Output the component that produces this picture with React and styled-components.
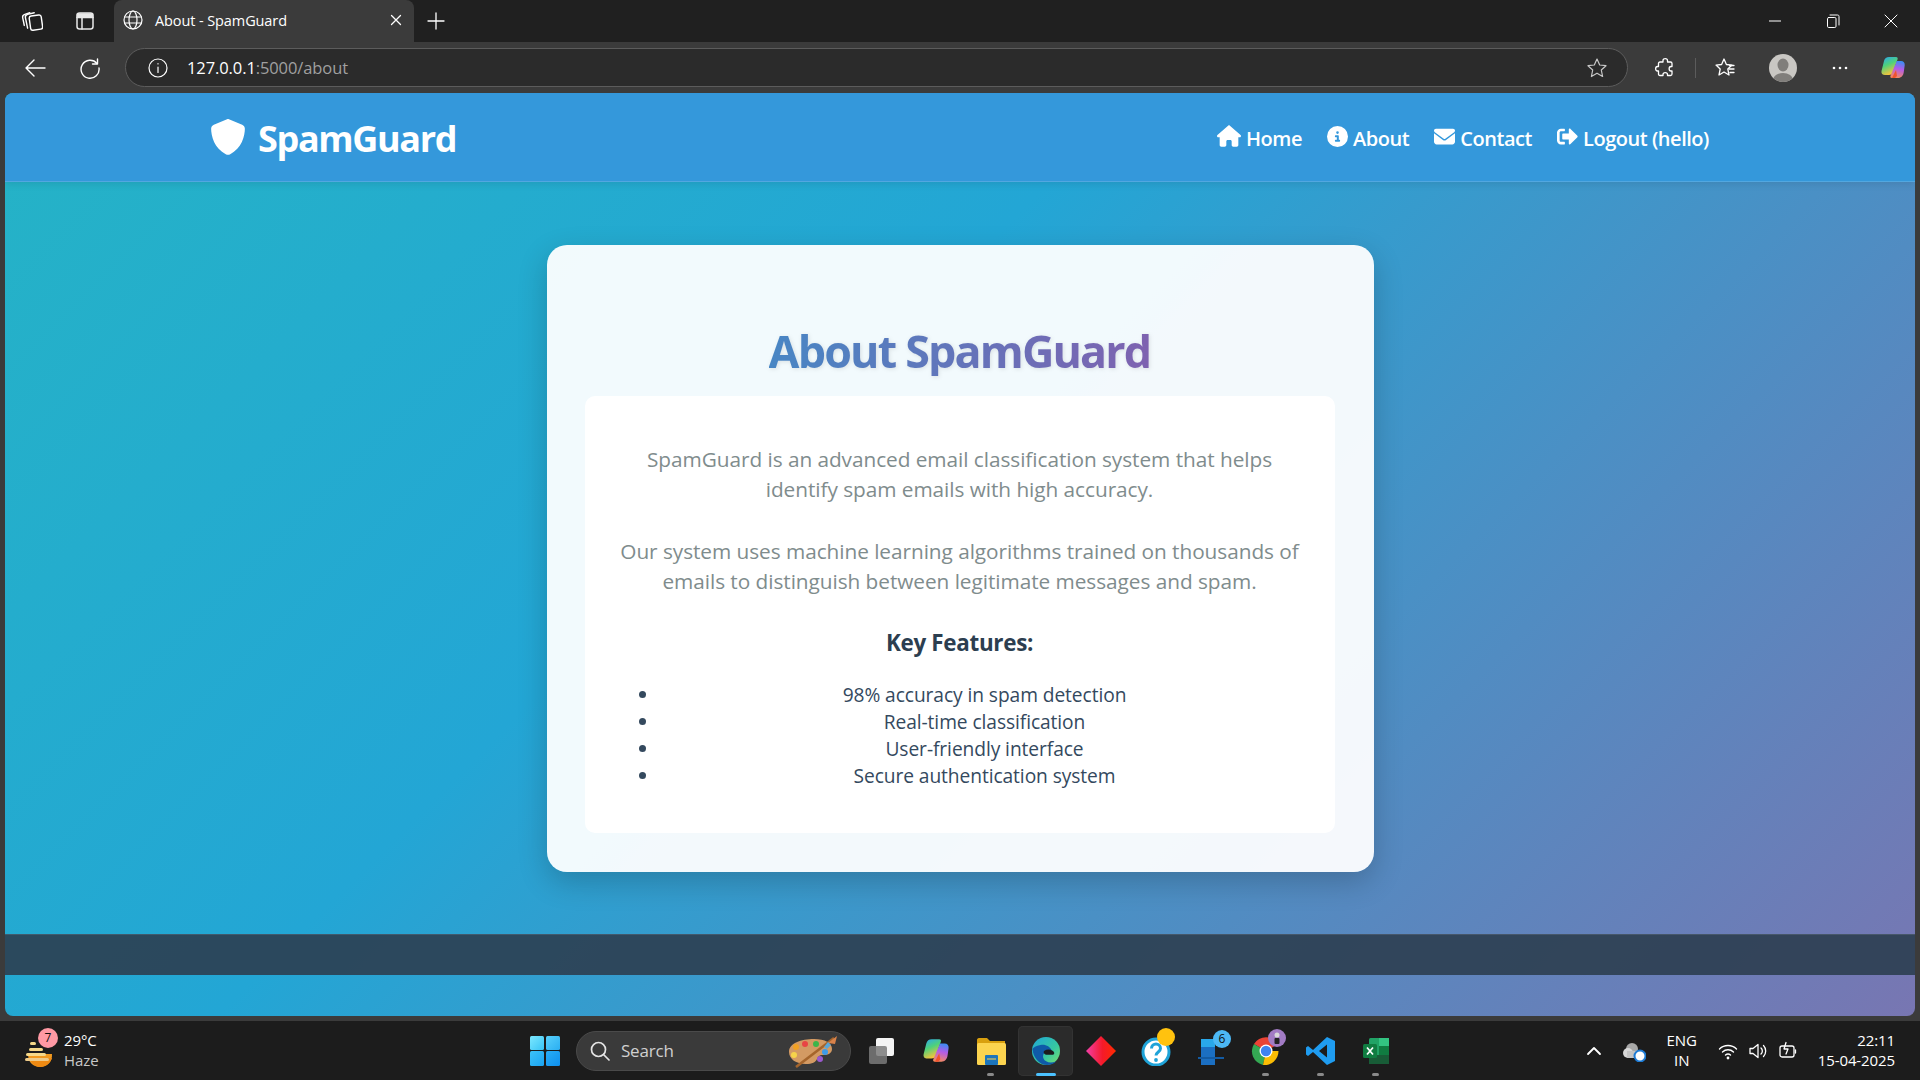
import React from 'react';
import styled, { createGlobalStyle } from 'styled-components';
import { FaSignOutAlt } from 'react-icons/fa';
import { FaShield, FaHouse, FaCircleInfo, FaEnvelope } from 'react-icons/fa6';

const GlobalStyle = createGlobalStyle`
  html, body { margin: 0; padding: 0; background: #3b3b3b; overflow: hidden; }
  * { box-sizing: border-box; }
`;

const Line = ({ size = 20, w = 1.3, children, vb = '0 0 20 20', stroke = '#fff' }) => (
  <svg width={size} height={size} viewBox={vb} fill="none" stroke={stroke} strokeWidth={w} strokeLinecap="round" strokeLinejoin="round">
    {children}
  </svg>
);

const CopilotIcon = ({ size = 26, id }) => (
  <svg width={size} height={size} viewBox="0 0 26 26">
    <defs>
      <linearGradient id={`${id}a`} x1="0" y1="0" x2="0.4" y2="1">
        <stop offset="0" stopColor="#2aa4f4" />
        <stop offset="0.5" stopColor="#4fd27a" />
        <stop offset="1" stopColor="#f5c33b" />
      </linearGradient>
      <linearGradient id={`${id}b`} x1="0.6" y1="0" x2="0.4" y2="1">
        <stop offset="0" stopColor="#3b8df2" />
        <stop offset="0.45" stopColor="#b35ce8" />
        <stop offset="1" stopColor="#f58a5c" />
      </linearGradient>
    </defs>
    <path d="M9 2h7c1.500 0 2 1 1.500 2.500L13 17c-.8 2-2 3-4 3H5C2.500 20 1 18.500 1.500 16L4 6c.6-2.600 2.500-4 5-4z" fill={`url(#${id}a)`} />
    <path d="M17 6h4c2.500 0 4 1.800 3.700 4.200l-1 7.300c-.4 3-2.500 5.500-5.700 5.500h-6c-1.500 0-2-1-1.500-2.300L16 8c.2-1 .4-2 1-2z" fill={`url(#${id}b)`} />
    <path d="M12 23l4-8 1 6-2 2z" fill="#f0532f" />
  </svg>
);

const EdgeIcon = () => (
  <svg width="30" height="30" viewBox="0 0 30 30">
    <defs>
      <linearGradient id="edgeA" x1="0" y1="0" x2="1" y2="1">
        <stop offset="0" stopColor="#1fa7d8" />
        <stop offset="0.6" stopColor="#37c8a0" />
        <stop offset="1" stopColor="#7fe06a" />
      </linearGradient>
    </defs>
    <circle cx="15" cy="15" r="14" fill="url(#edgeA)" />
    <path d="M1.500 13C2 21 8 29 16 29c4 0 7-1.500 9-3.500-6 2-11 .5-12.500-3-1.500-3.500 1-6.500 3.500-7.500 1.500-.6 3-.5 5 0C19 10 14 8 9.500 9 5 10 2 11.500 1.500 13z" fill="#0f5aa8" />
    <path d="M13 15c3-2 6-1.800 8.500-.2 2.500 1.500 2 3.700.5 4h-6c-2.500 0-4-2-3-3.800z" fill="#1c1c1c" />
  </svg>
);

const ChromeIcon = () => (
  <svg width="30" height="30" viewBox="0 0 30 30">
    <path d="M15 15L3 8a14 14 0 0 1 24.100 0z" fill="#ea4335" />
    <path d="M15 15l-12-7a14 14 0 0 0 9 21z" fill="#34a853" />
    <path d="M15 15h12.500A14 14 0 0 1 12 29z" fill="#fbbc04" />
    <circle cx="15" cy="15" r="6.500" fill="#fff" />
    <circle cx="15" cy="15" r="5.200" fill="#3f83f0" />
  </svg>
);

const WeatherIcon = () => (
  <svg width="32" height="34" viewBox="0 0 32 34">
    <path d="M4 20h24c.5 8-5 13-12 13S4 28 4 20z" fill="#f29a1f" />
    <path d="M6 24h22c-1 4-6 9-12 9-5 0-9-4-10-9z" fill="#ee8a13" />
    <rect x="6" y="8" width="6" height="3" rx="1.500" fill="#f6d98a" />
    <rect x="5" y="14" width="14" height="3" rx="1.500" fill="#f6d98a" />
    <rect x="2" y="19" width="20" height="3" rx="1.500" fill="#f6d98a" />
    <rect x="1" y="24" width="24" height="3" rx="1.500" fill="#eecb8a" />
  </svg>
);

const PaletteIcon = () => (
  <svg width="54" height="34" viewBox="0 0 54 34">
    <path d="M3 18C3 9 15 5 28 5c11 0 18 4 18 10 0 5-5 6-9 6-4 0-5 2-6 4-1 3-5 5-11 5C10 30 3 25 3 18z" fill="#d39a63" />
    <circle cx="10" cy="13" r="3" fill="#f2a122" />
    <circle cx="19" cy="10" r="3" fill="#e84444" />
    <circle cx="30" cy="10" r="3" fill="#3bb54a" />
    <circle cx="8" cy="21" r="3" fill="#f6d34a" />
    <circle cx="39" cy="18" r="3" fill="#3d9be9" />
    <circle cx="34" cy="25" r="3" fill="#9b59d0" />
    <path d="M10 33L48 4" stroke="#a5652c" strokeWidth="2.600" />
    <path d="M42 9l9-7-2 8z" fill="#d9824a" />
    <path d="M38 13l4-5 3 3-4 4z" fill="#5aa6d8" />
  </svg>
);

const Desktop = styled.div`
  width: 1920px;
  height: 1080px;
  display: flex;
  flex-direction: column;
  background: #3b3b3b;
  overflow: hidden;
  font-family: "Open Sans", "Noto Sans", sans-serif;
`;

const TabStrip = styled.div`
  height: 42px;
  flex: none;
  display: flex;
  align-items: center;
  padding-left: 5px;
  background: #202020;
`;

const Slot = styled.div`
  width: ${(p) => p.$w || 53}px;
  height: ${(p) => p.$h || 42}px;
  flex: none;
  margin-left: ${(p) => p.$ml || 0}px;
  display: flex;
  align-items: center;
  justify-content: center;
`;

const Tab = styled.div`
  width: 300px;
  height: 42px;
  margin-left: 3px;
  padding: 0 11px 2px 9px;
  display: flex;
  align-items: center;
  gap: 12px;
  background: #3b3b3b;
  border-radius: 8px 8px 0 0;
`;

const TabTitle = styled.span`
  flex: 1;
  color: #fff;
  font-size: 14.500px;
  letter-spacing: -0.1px;
`;

const WindowButtons = styled.div`
  margin-left: auto;
  display: flex;
`;

const Toolbar = styled.div`
  height: 51px;
  flex: none;
  display: flex;
  align-items: center;
  padding-left: 7px;
`;

const AddressBar = styled.div`
  width: 1503px;
  height: 39px;
  margin-left: 8px;
  padding: 0 19px 0 22px;
  display: flex;
  align-items: center;
  gap: 19px;
  background: #2b2b2b;
  border: 1.5px solid #5c5c5c;
  border-radius: 20px;
`;

const Url = styled.span`
  flex: 1;
  color: #a0a0a0;
  font-size: 16.500px;
  letter-spacing: -0.1px;
`;

const UrlHost = styled.span`
  color: #fff;
`;

const ToolDivider = styled.div`
  width: 1px;
  height: 20px;
  flex: none;
  margin: 0 4px 0 5px;
  background: #5c5c5c;
`;

const Avatar = styled.div`
  width: 28px;
  height: 28px;
  border-radius: 50%;
  background: #c9c7c3;
  overflow: hidden;
  display: flex;
  align-items: flex-end;
  justify-content: center;
`;

const Viewport = styled.div`
  height: 923px;
  flex: none;
  margin: 0 5px;
  display: flex;
  flex-direction: column;
  border-radius: 8px;
  overflow: hidden;
  background: linear-gradient(135deg, #25b3c6 0%, #23a6d5 40%, #7876b2 100%);
`;

const Navbar = styled.nav`
  position: relative;
  z-index: 1;
  height: 89px;
  flex: none;
  display: flex;
  justify-content: center;
  background: #3498db;
  border-bottom: 1px solid rgba(255, 255, 255, 0.15);
  box-shadow: 0 2px 8px rgba(0, 0, 0, 0.1);
`;

const NavInner = styled.div`
  width: 1500px;
  padding: 3px 1px 0 0;
  display: flex;
  align-items: center;
  justify-content: space-between;
`;

const Brand = styled.div`
  display: flex;
  align-items: center;
  gap: 12px;
  color: #fff;
  font-size: 36px;
  font-weight: 700;
  letter-spacing: -1.350px;
  svg { margin-bottom: 3px; }
`;

const NavLinks = styled.div`
  display: flex;
  gap: 25px;
`;

const NavLink = styled.a`
  display: flex;
  align-items: center;
  gap: 5px;
  color: #fff;
  font-size: 20px;
  font-weight: 600;
  letter-spacing: -0.46px;
  svg { margin-bottom: 5px; }
`;

const Main = styled.main`
  height: 752px;
  flex: none;
  padding-top: 63px;
  display: flex;
  justify-content: center;
`;

const Card = styled.section`
  width: 827px;
  height: 627px;
  padding: 81px 39px 39px 38px;
  display: flex;
  flex-direction: column;
  background: rgba(255, 255, 255, 0.94);
  border-radius: 20px;
  box-shadow: 0 10px 30px rgba(0, 0, 0, 0.2);
`;

const Title = styled.h1`
  margin: 0 0 20px;
  height: 50px;
  line-height: 50px;
  width: fit-content;
  align-self: center;
  font-size: 44.800px;
  font-weight: 700;
  letter-spacing: -1.830px;
  color: transparent;
  background: linear-gradient(90deg, #4886c4, #7e62b0);
  background-clip: text;
  -webkit-background-clip: text;
  filter: drop-shadow(1px 1px 2px rgba(0, 0, 0, 0.1));
`;

const Panel = styled.div`
  flex: 1;
  padding: 48px 25px 0;
  background: #fff;
  border-radius: 10px;
  text-align: center;
`;

const Para = styled.p`
  margin: 0 0 32px;
  color: #7f8c8d;
  font-size: 20.800px;
  line-height: 30px;
  letter-spacing: -0.05px;
`;

const FeatureHead = styled.h3`
  margin: 0 0 23px;
  color: #2c3e50;
  font-size: 22.400px;
  line-height: 30px;
  font-weight: 700;
  letter-spacing: -0.3px;
`;

const Features = styled.ul`
  margin: 0;
  padding: 0 0 0 50px;
  list-style: disc;
`;

const Feature = styled.li`
  color: #34495e;
  font-size: 19.200px;
  line-height: 27px;
  letter-spacing: -0.08px;
`;

const Footer = styled.footer`
  height: 41px;
  flex: none;
  background: rgba(44, 62, 80, 0.9);
  border-top: 1px solid rgba(255, 255, 255, 0.1);
`;

const Taskbar = styled.div`
  height: 59px;
  flex: none;
  margin-top: 5px;
  display: flex;
  align-items: center;
  background: #1c1c1c;
  color: #fff;
`;

const Weather = styled.div`
  width: 530px;
  flex: none;
  padding-left: 24px;
  display: flex;
  align-items: center;
  gap: 8px;
`;

const WeatherPic = styled.div`
  position: relative;
  height: 34px;
`;

const Badge = styled.span`
  position: absolute;
  top: -6px;
  left: 14px;
  width: 20px;
  height: 20px;
  border-radius: 50%;
  background: #ff99a4;
  color: #111;
  font-size: 12px;
  line-height: 20px;
  text-align: center;
`;

const Stack = styled.div`
  display: flex;
  flex-direction: column;
  margin-top: -2px;
  align-items: ${(p) => p.$align || 'flex-start'};
  font-size: 15px;
  line-height: 20px;
  letter-spacing: -0.1px;
  color: ${(p) => p.$color || '#fff'};
`;

const Muted = styled.span`
  color: #c8c8c8;
`;

const StartLogo = styled.div`
  width: 30px;
  height: 30px;
  margin-right: 16px;
  display: grid;
  grid-template-columns: 1fr 1fr;
  gap: 1.500px;
`;

const Pane = styled.span`
  border-radius: 1.500px;
  background: ${(p) => p.$c};
`;

const SearchPill = styled.div`
  width: 275px;
  height: 40px;
  padding: 0 10px 0 12px;
  display: flex;
  align-items: center;
  gap: 10px;
  background: #3a3a3a;
  border: 1px solid #4a4a4a;
  border-radius: 20px;
`;

const SearchText = styled.span`
  flex: 1;
  color: #d0d0d0;
  font-size: 17px;
  letter-spacing: -0.2px;
`;

const TaskApps = styled.div`
  margin-left: 2px;
  display: flex;
  height: 50px;
  align-items: center;
`;

const TaskApp = styled.div`
  position: relative;
  width: 55px;
  height: 50px;
  flex: none;
  display: flex;
  align-items: center;
  justify-content: center;
  border-radius: 5px;
  ${(p) => p.$active && 'background: #2b2b2b; box-shadow: inset 0 0 0 1px #333;'}
`;

const Dot = styled.span`
  position: absolute;
  bottom: 0;
  left: 50%;
  height: 3px;
  width: ${(p) => (p.$active ? 20 : 7)}px;
  margin-left: ${(p) => (p.$active ? -10 : -3.5)}px;
  border-radius: 2px;
  background: ${(p) => (p.$active ? '#4cc2ff' : '#8a8a8a')};
`;

const Counter = styled.span`
  position: absolute;
  top: ${(p) => p.$top}px;
  left: ${(p) => p.$left}px;
  width: ${(p) => p.$size}px;
  height: ${(p) => p.$size}px;
  display: flex;
  align-items: center;
  justify-content: center;
  border-radius: 50%;
  background: ${(p) => p.$c};
  color: #111;
  font-size: 12px;
`;

const Tray = styled.div`
  margin-left: auto;
  display: flex;
  align-items: center;
`;

const TrayIcon = styled.div`
  width: ${(p) => p.$w || 30}px;
  display: flex;
  justify-content: center;
`;

const Clock = styled.div`
  margin: 0 25px 0 15px;
`;

const navItems = [
  { label: 'Home', Icon: FaHouse, size: 24 },
  { label: 'About', Icon: FaCircleInfo, size: 21 },
  { label: 'Contact', Icon: FaEnvelope, size: 21 },
  { label: 'Logout (hello)', Icon: FaSignOutAlt, size: 21 },
];

const features = [
  '98% accuracy in spam detection',
  'Real-time classification',
  'User-friendly interface',
  'Secure authentication system',
];

export default function App() {
  return (
    <Desktop>
      <GlobalStyle />
      <TabStrip>
        <Slot>
          <Line size={22}>
            <rect x="8" y="5" width="11" height="13" rx="2" transform="rotate(-8 13 11)" />
            <path d="M6 16.500L4 7c-.3-1.500.5-2.500 2-3l6-1.500" />
            <path d="M3 14L1.500 7c-.3-1.500.5-2.500 2-3L8 2.500" />
          </Line>
        </Slot>
        <Slot>
          <Line size={20} w={1.5} stroke="#e8e8e8">
            <rect x="2" y="2" width="16" height="16" rx="2.500" />
            <path d="M2 6.500h16M7 6.500V18" />
            <path d="M2.500 3h15v3h-15z" fill="#e8e8e8" />
          </Line>
        </Slot>
        <Tab>
          <Line size={20} w={1.2}>
            <circle cx="10" cy="10" r="9" />
            <ellipse cx="10" cy="10" rx="4" ry="9" />
            <path d="M1.500 7h17M1.500 13h17" />
          </Line>
          <TabTitle>About - SpamGuard</TabTitle>
          <Line size={14} w={1.3} vb="0 0 14 14">
            <path d="M2.500 2.500l9 9M11.500 2.500l-9 9" />
          </Line>
        </Tab>
        <Slot $w={44}>
          <Line size={18} w={1.3} vb="0 0 18 18">
            <path d="M9 1v16M1 9h16" />
          </Line>
        </Slot>
        <WindowButtons>
          <Slot $w={58}>
            <Line size={12} w={1} vb="0 0 12 12">
              <path d="M0 6h12" />
            </Line>
          </Slot>
          <Slot $w={58}>
            <Line size={14} w={1} vb="0 0 14 14">
              <rect x="1.500" y="3.500" width="8.500" height="10" rx="1.200" />
              <path d="M4 1h7.500c1 0 1.500.5 1.500 1.500V11" />
            </Line>
          </Slot>
          <Slot $w={58}>
            <Line size={14} w={1} vb="0 0 14 14">
              <path d="M1 1l12 12M13 1L1 13" />
            </Line>
          </Slot>
        </WindowButtons>
      </TabStrip>

      <Toolbar>
        <Slot $w={55} $h={51}>
          <Line size={22} w={1.4} vb="0 0 22 22">
            <path d="M2 11h19M10 3l-8 8 8 8" />
          </Line>
        </Slot>
        <Slot $w={55} $h={51}>
          <Line size={22} w={1.4} vb="0 0 22 22">
            <path d="M18 6.500A9 9 0 1 0 20 11" />
            <path d="M18.500 2v5h-5" />
          </Line>
        </Slot>
        <AddressBar>
          <Line size={20} w={1.2}>
            <circle cx="10" cy="10" r="9" />
            <path d="M10 9v5.500M10 5.600v.4" />
          </Line>
          <Url>
            <UrlHost>127.0.0.1</UrlHost>:5000/about
          </Url>
          <Line size={22} w={1.2} vb="0 0 22 22" stroke="#c8c8c8">
            <path d="M11 2l2.700 6 6.300.7-4.700 4.300 1.300 6.500L11 16.200 5.400 19.500l1.300-6.500L2 8.700 8.300 8z" />
          </Line>
        </AddressBar>
        <Slot $w={50} $h={51} $ml={12}>
          <Line size={22} w={1.3} vb="0 0 22 22">
            <path d="M9 3.500c0-2.500 4.500-2.500 4.500 0V5h3c1 0 1.500.5 1.500 1.500v3h-1c-2.500 0-2.500 4.500 0 4.500h1v3c0 1-.5 1.500-1.500 1.500h-3v-1c0-2.500-4.500-2.500-4.500 0v1H6c-1 0-1.500-.5-1.500-1.500V14H3.500c-2.500 0-2.500-4.500 0-4.500h1v-3C4.500 5.500 5 5 6 5h3z" />
          </Line>
        </Slot>
        <ToolDivider />
        <Slot $w={50} $h={51}>
          <Line size={22} w={1.3} vb="0 0 22 22">
            <path d="M10 2l2.400 5.500 5.600.6-4.200 3.900 1.200 6-5-3-5 3 1.200-6L2 8.100l5.600-.6z" />
            <path d="M15 12h5M16 15.500h4M15.500 8.500H20" />
          </Line>
        </Slot>
        <Slot $w={56} $h={51} $ml={5}>
          <Avatar>
            <svg width="28" height="28" viewBox="0 0 28 28">
              <ellipse cx="14" cy="11" rx="5.500" ry="6.500" fill="#807e7b" />
              <ellipse cx="14" cy="26" rx="10" ry="7" fill="#807e7b" />
            </svg>
          </Avatar>
        </Slot>
        <Slot $w={57} $h={51}>
          <svg width="16" height="4" viewBox="0 0 16 4" fill="#fff">
            <circle cx="2" cy="2" r="1.300" />
            <circle cx="8" cy="2" r="1.300" />
            <circle cx="14" cy="2" r="1.300" />
          </svg>
        </Slot>
        <Slot $w={50} $h={51}>
          <CopilotIcon id="cpA" />
        </Slot>
      </Toolbar>

      <Viewport>
        <Navbar>
          <NavInner>
            <Brand>
              <FaShield size={36} />
              SpamGuard
            </Brand>
            <NavLinks>
              {navItems.map(({ label, Icon, size }) => (
                <NavLink key={label}>
                  <Icon size={size} />
                  {label}
                </NavLink>
              ))}
            </NavLinks>
          </NavInner>
        </Navbar>
        <Main>
          <Card>
            <Title>About SpamGuard</Title>
            <Panel>
              <Para>
                SpamGuard is an advanced email classification system that helps
                <br />
                identify spam emails with high accuracy.
              </Para>
              <Para>
                Our system uses machine learning algorithms trained on thousands of
                <br />
                emails to distinguish between legitimate messages and spam.
              </Para>
              <FeatureHead>Key Features:</FeatureHead>
              <Features>
                {features.map((f) => (
                  <Feature key={f}>{f}</Feature>
                ))}
              </Features>
            </Panel>
          </Card>
        </Main>
        <Footer />
      </Viewport>

      <Taskbar>
        <Weather>
          <WeatherPic>
            <WeatherIcon />
            <Badge>7</Badge>
          </WeatherPic>
          <Stack>
            <span>29°C</span>
            <Muted>Haze</Muted>
          </Stack>
        </Weather>
        <StartLogo>
          <Pane $c="linear-gradient(135deg, #7ce8ff, #39c4f6)" />
          <Pane $c="linear-gradient(135deg, #58d0fb, #2aaef2)" />
          <Pane $c="linear-gradient(135deg, #3cc2f8, #1ba4f2)" />
          <Pane $c="linear-gradient(135deg, #28aef6, #0e8fee)" />
        </StartLogo>
        <SearchPill>
          <Line size={22} w={1.7} vb="0 0 22 22" stroke="#e4e4e4">
            <circle cx="9.500" cy="9.500" r="7" />
            <path d="M14.500 14.500L20 20" />
          </Line>
          <SearchText>Search</SearchText>
          <PaletteIcon />
        </SearchPill>
        <TaskApps>
          <TaskApp>
            <svg width="30" height="30" viewBox="0 0 30 30">
              <rect x="10" y="2" width="18" height="18" rx="2" fill="#f4f4f4" />
              <rect x="3" y="10" width="18" height="18" rx="2" fill="#7a7a7a" fillOpacity="0.85" />
            </svg>
          </TaskApp>
          <TaskApp>
            <CopilotIcon id="cpB" size={28} />
          </TaskApp>
          <TaskApp>
            <svg width="30" height="28" viewBox="0 0 30 28">
              <path d="M1 3c0-1 .6-2 2-2h8l3 3h15v6H1z" fill="#d9a00f" />
              <rect x="1" y="6" width="29" height="22" rx="1.500" fill="#fcd44f" />
              <rect x="9" y="18" width="13" height="10" rx="1" fill="#1c75bc" />
              <path d="M11 22h9" stroke="#fcd44f" strokeWidth="1" />
            </svg>
            <Dot />
          </TaskApp>
          <TaskApp $active>
            <EdgeIcon />
            <Dot $active />
          </TaskApp>
          <TaskApp>
            <svg width="30" height="30" viewBox="0 0 30 30">
              <defs>
                <linearGradient id="gemG" x1="0" y1="0" x2="1" y2="0">
                  <stop offset="0" stopColor="#f23fa8" />
                  <stop offset="0.55" stopColor="#f51a2a" />
                  <stop offset="1" stopColor="#ff2a00" />
                </linearGradient>
              </defs>
              <path d="M15 0l15 15-15 15L0 15z" fill="url(#gemG)" />
            </svg>
          </TaskApp>
          <TaskApp>
            <svg width="30" height="30" viewBox="0 0 30 30">
              <circle cx="15" cy="16" r="13" fill="#fff" stroke="#1fa3d8" strokeWidth="3" />
              <path d="M10.500 12.500c0-6 9-6 9 0 0 3.500-4.500 3.500-4.500 7" fill="none" stroke="#1fa3d8" strokeWidth="3" />
              <circle cx="15" cy="24" r="1.900" fill="#1fa3d8" />
            </svg>
            <Counter $top={2} $left={29} $size={18} $c="#ffc20e" />
          </TaskApp>
          <TaskApp>
            <svg width="30" height="28" viewBox="0 0 30 28">
              <rect x="5" y="2" width="14" height="26" fill="#1b6fc2" />
              <rect x="5" y="2" width="14" height="8" fill="#29a8ea" />
              <rect x="2" y="20" width="26" height="2" fill="#135ba3" />
            </svg>
            <Counter $top={4} $left={30} $size={18} $c="#4cb8f5">6</Counter>
          </TaskApp>
          <TaskApp>
            <ChromeIcon />
            <Counter $top={3} $left={30} $size={18} $c="#a27bc4">
              <svg width="8" height="12" viewBox="0 0 8 12">
                <circle cx="4" cy="3" r="2.500" fill="#d8d8d8" />
                <rect x="1.500" y="6" width="5" height="6" rx="1" fill="#222" />
              </svg>
            </Counter>
            <Dot />
          </TaskApp>
          <TaskApp>
            <svg width="30" height="30" viewBox="0 0 30 30">
              <path d="M21 1l8 4v20l-8 4L7 16l-5 4-2-1.500V11.500L2 10l5 4zM21 8.500L13 15l8 6.500z" fill="#1f9cf0" />
            </svg>
            <Dot />
          </TaskApp>
          <TaskApp>
            <svg width="30" height="30" viewBox="0 0 30 30">
              <rect x="8" y="2" width="20" height="26" rx="1.500" fill="#21a366" />
              <rect x="18" y="2" width="10" height="8" fill="#33c481" />
              <rect x="8" y="19" width="20" height="9" fill="#185c37" />
              <rect x="18" y="10" width="10" height="9" fill="#107c41" />
              <rect x="2" y="8" width="14" height="14" rx="1.500" fill="#107c41" />
              <path d="M6 11.500l6 7M12 11.500l-6 7" stroke="#fff" strokeWidth="1.700" />
            </svg>
            <Dot />
          </TaskApp>
        </TaskApps>
        <Tray>
          <TrayIcon $w={46}>
            <Line size={16} w={1.8} vb="0 0 16 16">
              <path d="M2 11l6-6 6 6" />
            </Line>
          </TrayIcon>
          <TrayIcon $w={34}>
            <svg width="24" height="22" viewBox="0 0 24 22">
              <circle cx="10" cy="9" r="6" fill="#a8a8a8" />
              <circle cx="6" cy="13" r="5" fill="#d8d8d8" />
              <rect x="5" y="11" width="12" height="7" fill="#c4c4c4" />
              <circle cx="18" cy="16" r="5.500" fill="#fff" stroke="#1c7ad4" strokeWidth="2" />
            </svg>
          </TrayIcon>
          <TrayIcon $w={62}>
            <Stack $align="center" $color="#fff">
              <span>ENG</span>
              <span>IN</span>
            </Stack>
          </TrayIcon>
          <TrayIcon>
            <Line size={20} w={1.4}>
              <path d="M1.500 8a12 12 0 0 1 17 0M4.500 11a8 8 0 0 1 11 0M7.500 14a4 4 0 0 1 5 0" />
              <circle cx="10" cy="17" r="0.700" fill="#fff" />
            </Line>
          </TrayIcon>
          <TrayIcon>
            <Line size={20} w={1.3}>
              <path d="M2 7.500v5h3l5 4v-13l-5 4zM13 7a4 4 0 0 1 0 6M15.500 4.500a8 8 0 0 1 0 11" />
            </Line>
          </TrayIcon>
          <TrayIcon>
            <Line size={20} w={1.3}>
              <rect x="2" y="5" width="14" height="11" rx="2" />
              <path d="M17.500 9v3M8 1.500L6 8h4l-2 5" />
            </Line>
          </TrayIcon>
          <Clock>
            <Stack $align="flex-end">
              <span>22:11</span>
              <span>15-04-2025</span>
            </Stack>
          </Clock>
        </Tray>
      </Taskbar>
    </Desktop>
  );
}
